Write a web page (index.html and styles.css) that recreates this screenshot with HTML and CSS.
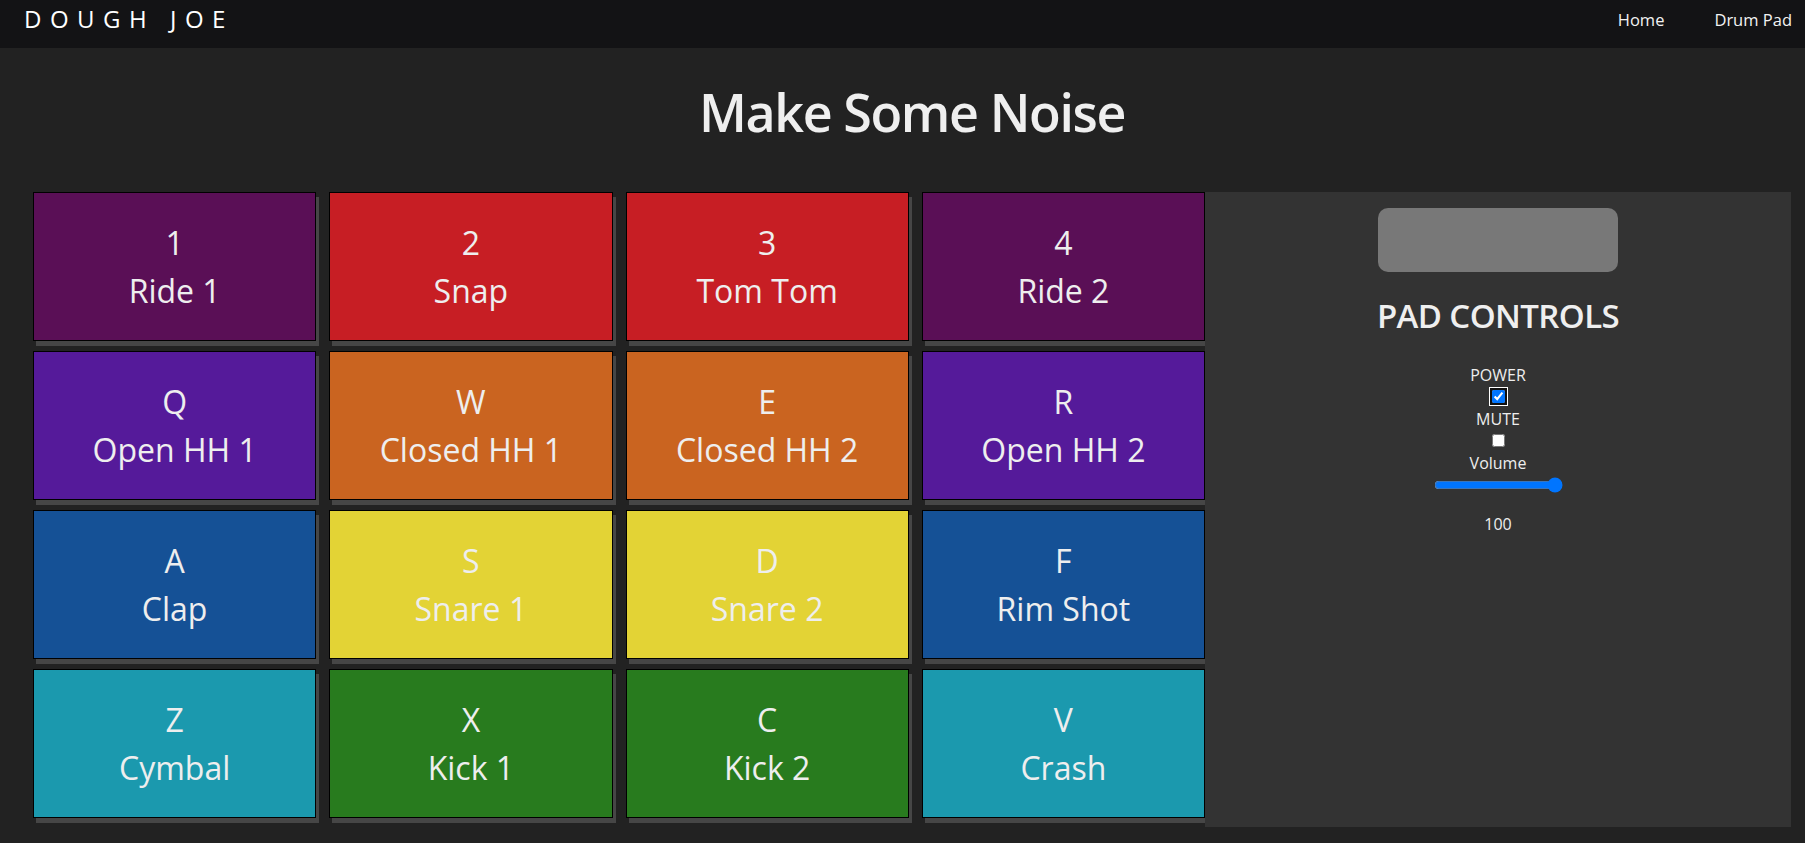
FILE: index.html
```html
<!DOCTYPE html>
<html lang="en">
<head>
<meta charset="utf-8">
<title>Dough Joe - Drum Pad</title>
<link rel="stylesheet" href="styles.css">
</head>
<body>
<header class="nav">
  <div class="logo">DOUGH JOE</div>
  <nav class="links">
    <a class="link" href="#">Home</a>
    <a class="link" href="#">Drum Pad</a>
  </nav>
</header>
<main class="main">
  <h1 class="title">Make Some Noise</h1>
  <div class="board">
    <div class="pads">
      <div class="pad pad-plum"><span>1</span><span>Ride 1</span></div>
      <div class="pad pad-red"><span>2</span><span>Snap</span></div>
      <div class="pad pad-red"><span>3</span><span>Tom Tom</span></div>
      <div class="pad pad-plum"><span>4</span><span>Ride 2</span></div>
      <div class="pad pad-violet"><span>Q</span><span>Open HH 1</span></div>
      <div class="pad pad-orange"><span>W</span><span>Closed HH 1</span></div>
      <div class="pad pad-orange"><span>E</span><span>Closed HH 2</span></div>
      <div class="pad pad-violet"><span>R</span><span>Open HH 2</span></div>
      <div class="pad pad-blue"><span>A</span><span>Clap</span></div>
      <div class="pad pad-yellow"><span>S</span><span>Snare 1</span></div>
      <div class="pad pad-yellow"><span>D</span><span>Snare 2</span></div>
      <div class="pad pad-blue"><span>F</span><span>Rim Shot</span></div>
      <div class="pad pad-teal"><span>Z</span><span>Cymbal</span></div>
      <div class="pad pad-green"><span>X</span><span>Kick 1</span></div>
      <div class="pad pad-green"><span>C</span><span>Kick 2</span></div>
      <div class="pad pad-teal"><span>V</span><span>Crash</span></div>
    </div>
    <aside class="panel">
      <div class="display"></div>
      <h2 class="panel-title">PAD CONTROLS</h2>
      <div class="controls">
        <label class="ctl-label" for="power">POWER</label>
        <input class="check check-focus" id="power" type="checkbox" checked>
        <label class="ctl-label" for="mute">MUTE</label>
        <input class="check" id="mute" type="checkbox">
        <label class="ctl-label" for="volume">Volume</label>
        <input class="volume" id="volume" type="range" min="0" max="100" value="100">
        <p class="vol-value">100</p>
      </div>
    </aside>
  </div>
</main>
</body>
</html>
```

FILE: styles.css
```css
* {
  box-sizing: border-box;
}

body {
  margin: 0;
  background: #222222;
  color: #eeeeee;
  font-family: "Open Sans", "Noto Sans", sans-serif;
}

.nav {
  height: 48px;
  background: #131315;
  display: flex;
  justify-content: space-between;
  align-items: flex-start;
  padding: 0 13px 0 24px;
}

.logo {
  font-size: 24px;
  font-weight: 400;
  line-height: 38px;
  letter-spacing: 8.5px;
  color: #ffffff;
}

.links {
  display: flex;
  gap: 50px;
}

.link {
  color: #f2f2f2;
  text-decoration: none;
  font-size: 16.5px;
  line-height: 40px;
}

.main {
  margin: 0 14px 0 33px;
}

.title {
  margin: 33px 0 49px;
  text-align: center;
  font-size: 52px;
  font-weight: 600;
  line-height: 62px;
  letter-spacing: -1.4px;
  color: #efefef;
}

.board {
  display: grid;
  grid-template-columns: 2fr 1fr;
}

.pads {
  display: grid;
  grid-template-columns: repeat(4, 1fr);
  grid-auto-rows: 149px;
  column-gap: 13px;
  row-gap: 10px;
  padding-bottom: 9px;
}

.pad {
  border: 1px solid #000000;
  box-shadow: 3px 5px 0 #464646;
  display: flex;
  flex-direction: column;
  justify-content: center;
  align-items: center;
  font-size: 32px;
  line-height: 48px;
  color: #eeeeee;
}

.pad-plum { background: #5a0f56; }
.pad-red { background: #c71e24; }
.pad-violet { background: #551a9a; }
.pad-orange { background: #ca6420; }
.pad-blue { background: #155196; }
.pad-yellow { background: #e3d335; }
.pad-teal { background: #1b99ae; }
.pad-green { background: #287b1e; }

.panel {
  position: relative;
  z-index: 1;
  background: #333333;
  display: flex;
  flex-direction: column;
  align-items: center;
  padding-top: 16px;
}

.display {
  width: 240px;
  height: 64px;
  border-radius: 10px;
  background: #787878;
}

.panel-title {
  margin: 24px 0 27px;
  font-size: 33px;
  font-weight: 600;
  line-height: 40px;
  letter-spacing: -0.6px;
  color: #efefef;
}

.controls {
  display: flex;
  flex-direction: column;
  align-items: center;
}

.ctl-label {
  font-size: 16px;
  line-height: 24px;
  color: #eeeeee;
}

.check {
  width: 13px;
  height: 13px;
  margin: 3px 0 4px;
}

.check-focus {
  outline: 2px solid #101010;
  outline-offset: 0;
  box-shadow: 0 0 0 3px #ffffff;
  border-radius: 2px;
}

.volume {
  margin: 2px 0;
}

.vol-value {
  margin: 17px 0 0;
  font-size: 16px;
  line-height: 24px;
  color: #eeeeee;
}
```
